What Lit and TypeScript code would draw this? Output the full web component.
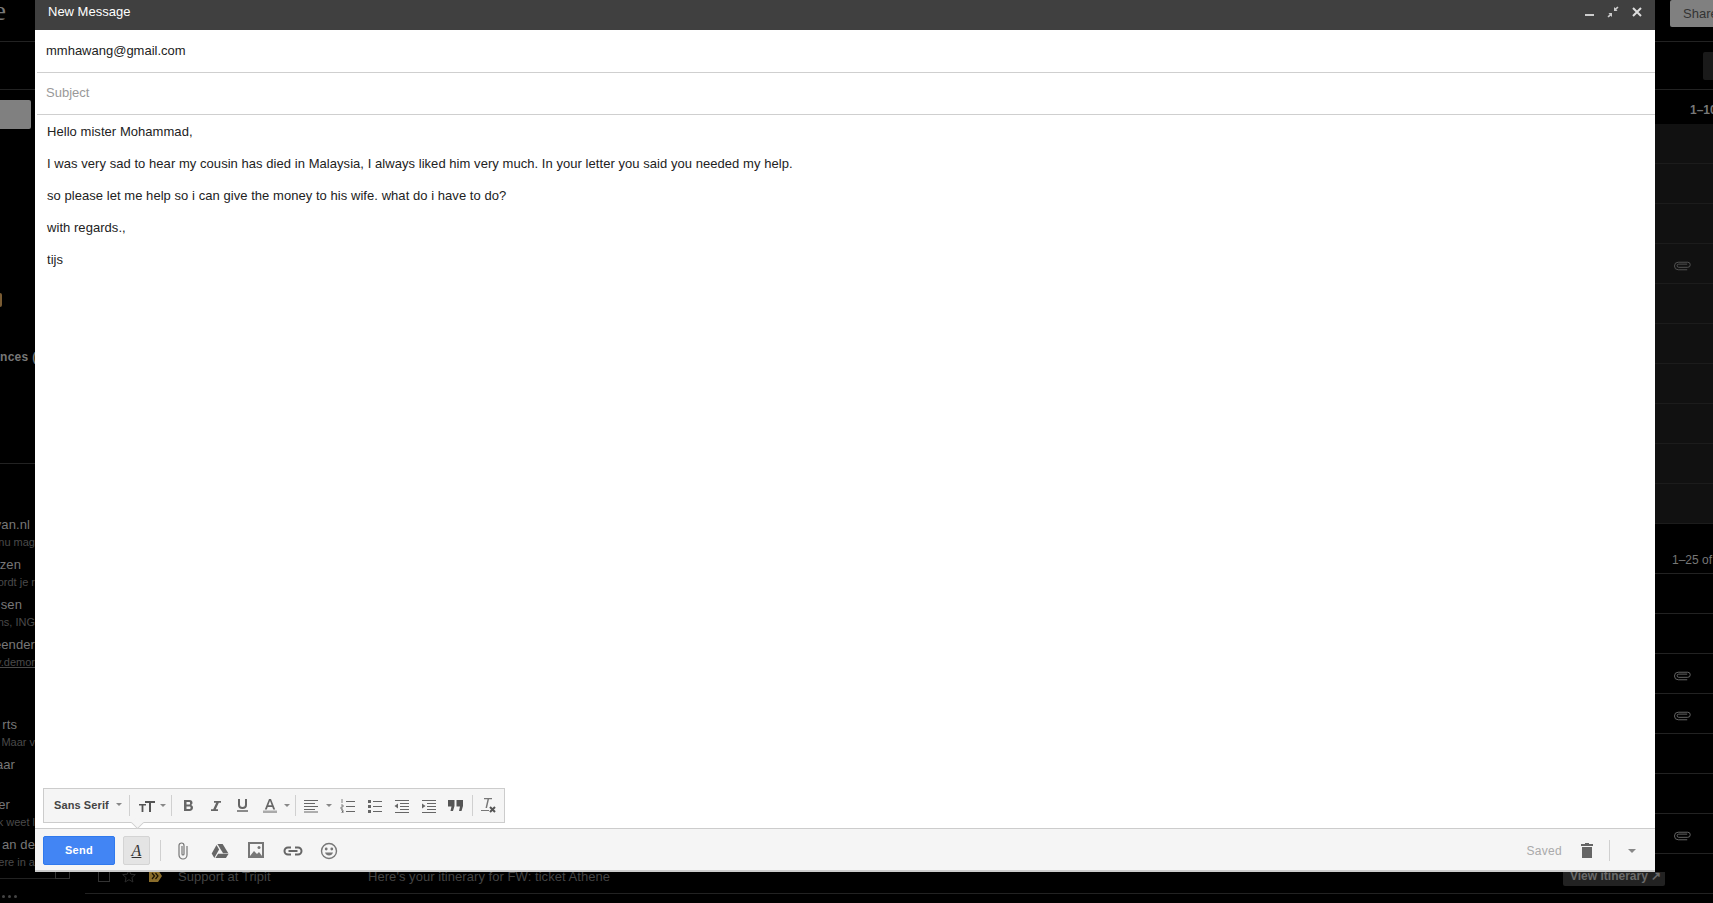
import { LitElement, html, css, svg } from "lit";
import { customElement } from "lit/decorators.js";

const clip = svg`<svg class="pc" width="17" height="10" viewBox="0 0 18 10" fill="none" stroke="currentColor" stroke-width="1"><path d="M14 3H5a1.600 1.600 0 0 0 0 3.400h9.500a2.600 2.600 0 0 0 0-5.400H4.500a4 4 0 0 0 0 8H14"/></svg>`;

const sideRows: [string, string][] = [
  ["van.nl", "main p5"],
  ["nu mag", "sub"],
  ["zen", "main p14"],
  ["ordt je r", "sub"],
  ["sen", "main p13"],
  ["ns, ING", "sub"],
  ["eender", "main"],
  ["v.demor", "sub link"],
  ["", "gap"],
  ["rts", "main p18"],
  [". Maar v", "sub"],
  ["aar", "main p20"],
  ["", "blank"],
  ["er", "main p25"],
  ["k weet l", "sub"],
  ["an de", "main"],
  ["ere in a", "sub"],
];

@customElement("app-root")
export class AppRoot extends LitElement {
  static styles = css`
    :host { display: block; width: 1713px; height: 903px; position: relative; overflow: hidden; background: #000; font-family: "Liberation Sans", Arial, sans-serif; }
    * { box-sizing: border-box; }

    .page { display: grid; grid-template-columns: 35px 1620px 58px; grid-template-rows: 872px 31px; width: 1713px; height: 903px; }

    .left { overflow: hidden; display: flex; flex-direction: column; color: #6e6e6e; }
    .logo { height: 42px; border-bottom: 1px solid #222; overflow: hidden; font: 27px "Liberation Serif", serif; color: #777; line-height: 22px; flex: none; }
    .logo span { display: block; margin-left: -6px; }
    .compose-slot { height: 48px; border-bottom: 1px solid #222; flex: none; }
    .grey-btn { width: 31px; height: 29px; margin-top: 10px; background: #808080; border-radius: 0 2px 2px 0; flex: none; }
    .dot { width: 2px; height: 14px; margin-top: 164px; background: #7a5c33; border-radius: 0 7px 7px 0; flex: none; }
    .nces { margin-top: 42px; height: 16px; line-height: 16px; font-size: 12px; font-weight: bold; color: #777; white-space: nowrap; letter-spacing: .3px; flex: none; }
    .side-line { height: 1px; background: #222; margin-top: 98px; flex: none; }
    .rows { margin-top: 52px; display: flex; flex-direction: column; }
    .row { display: flex; justify-content: flex-end; white-space: nowrap; overflow: hidden; flex: none; }
    .main { height: 17px; line-height: 17px; font-size: 13px; color: #777; letter-spacing: .1px; }
    .sub { height: 23px; line-height: 18px; font-size: 11px; color: #4a4a4a; }
    .link { text-decoration: underline; }
    .gap { height: 40px; }
    .blank { height: 23px; }
    .p5 { padding-right: 5px; } .p14 { padding-right: 14px; } .p13 { padding-right: 13px; } .p18 { padding-right: 18px; } .p20 { padding-right: 20px; } .p25 { padding-right: 25px; }

    .center { background: #000; }

    .right { background: #000; overflow: hidden; display: flex; flex-direction: column; color: #6e6e6e; }
    .share-bar { height: 42px; border-bottom: 1px solid #222; padding-left: 15px; flex: none; }
    .share { display: block; width: 60px; height: 27px; background: #808080; border-radius: 2px 0 0 2px; color: #333; font-size: 13px; line-height: 27px; padding-left: 13px; white-space: nowrap; }
    .tool-bar { height: 48px; border-bottom: 1px solid #222; padding: 10px 0 0 48px; flex: none; }
    .tool-bar i { display: block; width: 30px; height: 28px; background: #1a1a1a; border-radius: 2px; }
    .count { height: 34px; line-height: 40px; white-space: nowrap; padding-left: 35px; font-size: 12px; font-weight: bold; color: #777; flex: none; overflow: hidden; }
    .list { background: #111; flex: none; }
    .m-row { height: 40px; flex: none; border-bottom: 1px solid #1c1c1c; display: flex; align-items: center; padding: 4px 0 0 19px; color: #555; }
    .section-head { height: 50px; padding: 24px 0 0 17px; line-height: 24px; white-space: nowrap; font-size: 12px; color: #777; border-bottom: 1px solid #222; flex: none; }
    .right .m-row.dark { border-bottom-color: #222; color: #6a6a6a; }

    .bottom { grid-column: 1 / 4; display: flex; position: relative; overflow: hidden; }
    .b-left { width: 70px; flex: none; margin-top: 6px; border-top: 1px solid #222; position: relative; }
    .b-left b { display: block; position: absolute; right: 0; top: -12px; width: 15px; height: 12px; border: 1px solid #333; }
    .dots { display: flex; gap: 3px; margin: 16px 0 0 2px; }
    .dots i { width: 3px; height: 3px; border-radius: 50%; background: #444; }
    .mail { margin-left: 15px; width: 1628px; height: 22px; border-bottom: 1px solid #222; position: relative; display: flex; align-items: center; color: #444; font-size: 13px; letter-spacing: .05px; padding-bottom: 13px; }
    .cb { width: 12px; height: 12px; border: 1px solid #333; margin-left: 13px; flex: none; }
    .star { margin-left: 12px; flex: none; }
    .mark { margin-left: 13px; flex: none; }
    .sender { margin-left: 16px; width: 190px; white-space: nowrap; flex: none; }
    .subject { white-space: nowrap; flex: none; }
    .itin { position: absolute; left: 1478px; top: 0; height: 14px; width: 102px; background: #222; border-radius: 0 0 2px 2px; color: #6a6a6a; font-weight: bold; font-size: 12px; line-height: 9px; padding-left: 7px; white-space: nowrap; letter-spacing: 0; }

    .compose { position: absolute; left: 35px; top: 0; width: 1620px; height: 872px; display: flex; flex-direction: column; background: #fff; }
    .head { height: 30px; flex: none; background: #404040; color: #fff; display: flex; align-items: center; font-size: 13px; padding: 0 12px 7px 13px; justify-content: space-between; }
    .head-icons { display: flex; gap: 12px; align-items: center; }
    .field { height: 43px; flex: none; margin-left: 2px; border-bottom: 1px solid #cfcfcf; display: flex; align-items: center; padding: 0 0 1px 9px; font-size: 13px; color: #222; }
    .field.subj { height: 42px; padding-bottom: 3px; color: #999; }
    .body { flex: 1; min-height: 0; display: flex; flex-direction: column; padding: 9px 8px 0; }
    .text { padding: 0 0 0 4px; color: #222; font-size: 13px; line-height: 16px; letter-spacing: .05px; }
    .text p { margin: 0 0 16px; }

    .fmt { margin-top: auto; margin-bottom: 5px; width: 462px; height: 35px; flex: none; background: #f5f5f5; border: 1px solid #ccc; display: flex; align-items: center; position: relative; color: #666; }
    .fmt::after { content: ""; position: absolute; left: 88px; bottom: -6px; width: 10px; height: 10px; background: #f5f5f5; border-right: 1px solid #ccc; border-bottom: 1px solid #ccc; transform: rotate(45deg) scale(.85); }
    .sep { width: 1px; height: 21px; background: #d0d0d0; flex: none; }
    .f { height: 100%; display: flex; align-items: center; justify-content: center; flex: none; }
    .font { width: 85px; padding-left: 10px; justify-content: flex-start; font-size: 11px; font-weight: bold; color: #444; letter-spacing: .1px; gap: 7px; white-space: nowrap; padding-bottom: 2px; }
    .size { width: 41px; gap: 5px; padding-left: 3px; }
    .w27 { width: 27px; } .w3 { width: 3px; } .wa { width: 12px; justify-content: flex-start; padding-left: 1px; } .w30 { width: 30px; } .w8 { width: 8px; justify-content: flex-start; } .wx { width: 30px; }

    .bar { height: 44px; flex: none; background: #f5f5f5; border-top: 1px solid #ccc; border-bottom: 2px solid #ccc; display: flex; align-items: center; padding: 2px 19px 0 8px; color: #666; }
    .send { width: 72px; height: 29px; flex: none; background: #4285f4; border: 1px solid #3079ed; border-radius: 2px; color: #fff; font-size: 11px; font-weight: bold; text-align: center; line-height: 27px; letter-spacing: .3px; }
    .fa { width: 27px; height: 29px; margin-left: 8px; flex: none; background: #e4e4e4; border: 1px solid #d4d4d4; border-radius: 2px; display: flex; justify-content: center; align-items: center; }
    .bar .sep { margin-left: 10px; height: 21px; }
    .attach { display: flex; gap: 16.5px; margin-left: 12px; align-items: center; }
    .attach svg { width: 20px; }
    .spacer { flex: 1; }
    .saved { color: #aaa; font-size: 12px; letter-spacing: .3px; }
    .trash { margin-left: 19px; }
    .bar .sep2 { width: 1px; height: 21px; background: #d0d0d0; margin: 0 18px 0 16px; }
    svg { display: block; flex: none; }
    .A { font: italic 16px "Liberation Serif", serif; color: #333; text-decoration: underline; line-height: 18px; }
  `;

  private caret(c = "#888") {
    return svg`<svg width="6" height="3" viewBox="0 0 6 3"><path d="M0 0h6L3 3z" fill=${c}/></svg>`;
  }

  private lines(kind: string) {
    return svg`<svg width="16" height="14" viewBox="0 0 16 14" fill="none" stroke="#666" stroke-width="1">
      ${kind === "align" ? svg`<path d="M1 1.500h14M1 4.500h11M1 7.500h14M1 10.500h11M1 13h14"/>` : ""}
      ${kind === "ol" ? svg`<path d="M6 2.500h9M6 7.500h9M6 12.500h9"/><path d="M2 0v4M1 6h2v2H1v2h2M1 11h2v1.500H2h1V14H1" stroke-width=".8"/>` : ""}
      ${kind === "ul" ? svg`<path d="M6 2.500h9M6 7.500h9M6 12.500h9"/><path d="M1 1h3v3H1zM1 6h3v3H1zM1 11h3v3H1z" fill="#666" stroke="none"/>` : ""}
      ${kind === "less" ? svg`<path d="M1 1.500h14M6 4.500h9M6 7.500h9M6 10.500h9M1 13.500h14"/><path d="M4 4.500v5L.5 7z" fill="#666" stroke="none"/>` : ""}
      ${kind === "more" ? svg`<path d="M1 1.500h14M6 4.500h9M6 7.500h9M6 10.500h9M1 13.500h14"/><path d="M1 4.500v5L4.500 7z" fill="#666" stroke="none"/>` : ""}
    </svg>`;
  }

  render() {
    return html`
      <div class="page">
        <div class="left">
          <div class="logo"><span>e</span></div>
          <div class="compose-slot"></div>
          <div class="grey-btn"></div>
          <div class="dot"></div>
          <div class="nces">nces (</div>
          <div class="side-line"></div>
          <div class="rows">
            ${sideRows.map(([t, c]) => html`<div class="row ${c}"><span>${t}</span></div>`)}
          </div>
        </div>
        <div class="center"></div>
        <div class="right">
          <div class="share-bar"><span class="share">Share</span></div>
          <div class="tool-bar"><i></i></div>
          <div class="count">1–10</div>
          <div class="list">
            ${Array.from({ length: 10 }, (_, i) => html`<div class="m-row">${i === 3 ? clip : ""}</div>`)}
          </div>
          <div class="section-head">1–25 of</div>
          ${[false, false, true, true, false, false, true, false].map(
            (c) => html`<div class="m-row dark">${c ? clip : ""}</div>`
          )}
        </div>
        <div class="bottom">
          <div class="b-left"><b></b><div class="dots"><i></i><i></i><i></i></div></div>
          <div class="mail">
            <span class="cb"></span>
            <svg class="star" width="14" height="14" viewBox="0 0 14 14" fill="none" stroke="#2c2c2c"><path d="M7 1l1.800 4.200 4.500.4-3.400 3 1 4.400L7 10.700 3.100 13l1-4.400-3.400-3 4.500-.4z"/></svg>
            <svg class="mark" width="13" height="12" viewBox="0 0 13 12"><path d="M0 0h9l4 6-4 6H0z" fill="#8a6d2b"/><path d="M3 3l2.500 3L3 9M6.500 3L9 6l-2.500 3" fill="none" stroke="#1a1200" stroke-width="1.200"/></svg>
            <span class="sender">Support at Tripit</span>
            <span class="subject">Here's your itinerary for FW: ticket Athene</span>
            <div class="itin">View itinerary ↗</div>
          </div>
        </div>
      </div>

      <div class="compose">
        <div class="head">
          <span>New Message</span>
          <span class="head-icons">
            <svg width="11" height="11" viewBox="0 0 11 11"><path d="M1 8h9v2H1z" fill="#ccc"/></svg>
            <svg width="12" height="12" viewBox="0 0 12 12" fill="#ccc"><path d="M7 5V1l1.300 1.300L10.500.5l1 1-2.200 2.200L10.600 5zM5 7v4L3.700 9.700 1.500 11.500l-1-1 2.200-2.200L1.400 7z"/></svg>
            <svg width="12" height="12" viewBox="0 0 12 12" fill="none" stroke="#ddd" stroke-width="2"><path d="M2 2l8 8M10 2l-8 8"/></svg>
          </span>
        </div>
        <div class="field">mmhawang@gmail.com</div>
        <div class="field subj">Subject</div>
        <div class="body">
          <div class="text">
            <p>Hello mister Mohammad,</p>
            <p>I was very sad to hear my cousin has died in Malaysia, I always liked him very much. In your letter you said you needed my help.</p>
            <p>so please let me help so i can give the money to his wife. what do i have to do?</p>
            <p>with regards.,</p>
            <p>tijs</p>
          </div>
          <div class="fmt">
            <div class="f font">Sans Serif ${this.caret()}</div>
            <span class="sep"></span>
            <div class="f size">
              <svg width="16" height="12" viewBox="0 0 16 12" fill="#555"><path d="M6 1h10v2h-4v9h-2V3H6z"/><path d="M0 4h7v1.500H4.400V12H2.600V5.500H0z"/></svg>
              ${this.caret()}
            </div>
            <span class="sep"></span>
            <div class="f w3"></div>
            <div class="f w27"><svg width="9" height="11" viewBox="0 0 9 11"><path fill-rule="evenodd" d="M0 0h5.500C7.500 0 8.500 1.200 8.500 2.800c0 1-.5 1.800-1.300 2.200 1.100.4 1.800 1.300 1.800 2.600C9 9.700 7.700 11 5.500 11H0zM2.500 2v2.500h2.600c.7 0 1-.5 1-1.300S5.800 2 5.100 2zm0 4.500V9h3c.7 0 1.100-.5 1.100-1.300S6.200 6.500 5.500 6.500z" fill="#666"/></svg></div>
            <div class="f w27"><svg width="10" height="10" viewBox="0 0 10 10"><path d="M3 0h7v1.800H7.800L4.800 8.200H7V10H0V8.200h2.200l3-6.400H3z" fill="#666"/></svg></div>
            <div class="f w27"><svg width="11" height="13" viewBox="0 0 11 13" fill="none" stroke="#666"><path d="M2 0v6c0 2 1.300 3 3.500 3S9 8 9 6V0" stroke-width="2"/><path d="M0 12h11" stroke-width="1.500"/></svg></div>
            <div class="f w27"><svg width="14" height="14" viewBox="0 0 14 14"><path d="M6 0h2l4.200 10.500h-2L9.300 8H4.700l-.9 2.500h-2zM5.300 6.300h3.400L7 1.800z" fill="#666"/><path d="M0 11.500h14V14H0z" fill="#aaa"/></svg></div>
            <div class="f wa">${this.caret()}</div>
            <span class="sep"></span>
            <div class="f w30">${this.lines("align")}</div>
            <div class="f w8">${this.caret()}</div>
            <div class="f w27">${this.lines("ol")}</div>
            <div class="f w27">${this.lines("ul")}</div>
            <div class="f w27">${this.lines("less")}</div>
            <div class="f w27">${this.lines("more")}</div>
            <div class="f w27"><svg width="15" height="11" viewBox="0 0 15 11"><path d="M0 0h6.500v6L5 11H2.500L3.500 6.500H0zM8.500 0H15v6l-1.500 5H11l1-4.500H8.500z" fill="#555"/></svg></div>
            <div class="f w3"></div>
            <span class="sep"></span>
            <div class="f wx"><svg width="16" height="15" viewBox="0 0 16 15"><path d="M4 0h8v1.200H9L7 10H5.500L7.500 1.200H4zM1 12h8v1H1z" fill="#777"/><path d="M10 9l5 5M15 9l-5 5" stroke="#555" stroke-width="2"/></svg></div>
          </div>
        </div>
        <div class="bar">
          <div class="send">Send</div>
          <div class="fa"><span class="A">A</span></div>
          <span class="sep"></span>
          <div class="attach">
            <svg width="20" height="18" viewBox="0 0 20 18" fill="none" stroke="#777" stroke-width="1.200"><path d="M14 4v9a4 4 0 0 1-8 0V3.500a2.500 2.500 0 0 1 5 0V12a1 1 0 0 1-2 0V4"/></svg>
            <svg height="14" viewBox="0 0 20 16" fill="#666"><path d="M7 0h6l6.500 10.500h-6z"/><path d="M6 1l3 5.200L3.500 16 .5 10.800z"/><path d="M4.800 16l3-5h12l-3 5z"/></svg>
            <svg height="17" viewBox="0 0 16 17"><path d="M0 0h16v16H0z" fill="#777"/><path d="M2 2h12v12H2z" fill="#f5f5f5"/><path d="M2 14l4-5 3 3 2-2 3 4z" fill="#777"/><circle cx="11" cy="5.500" r="1.500" fill="#777"/></svg>
            <svg height="10" viewBox="0 0 20 10" fill="none" stroke="#666" stroke-width="2"><path d="M8 1.500H5a3.500 3.500 0 0 0 0 7h3M12 1.500h3a3.500 3.500 0 0 1 0 7h-3M5.500 5h9"/></svg>
            <svg height="18" viewBox="0 0 18 18" fill="none" stroke="#777" stroke-width="1.400"><circle cx="9" cy="9" r="7.500"/><circle cx="6.200" cy="7" r=".7" fill="#777"/><circle cx="11.800" cy="7" r=".7" fill="#777"/><path d="M5 10.500h8c-.6 2-2 3-4 3s-3.400-1-4-3z" fill="#777" stroke="none"/></svg>
          </div>
          <div class="spacer"></div>
          <span class="saved">Saved</span>
          <svg class="trash" width="12" height="15" viewBox="0 0 12 15"><path d="M4 0h4v1h4v2H0V1h4zM1 4h10v11H1z" fill="#666"/></svg>
          <span class="sep2"></span>
          ${svg`<svg width="8" height="4" viewBox="0 0 8 4"><path d="M0 0h8L4 4z" fill="#888"/></svg>`}
        </div>
      </div>
    `;
  }
}
